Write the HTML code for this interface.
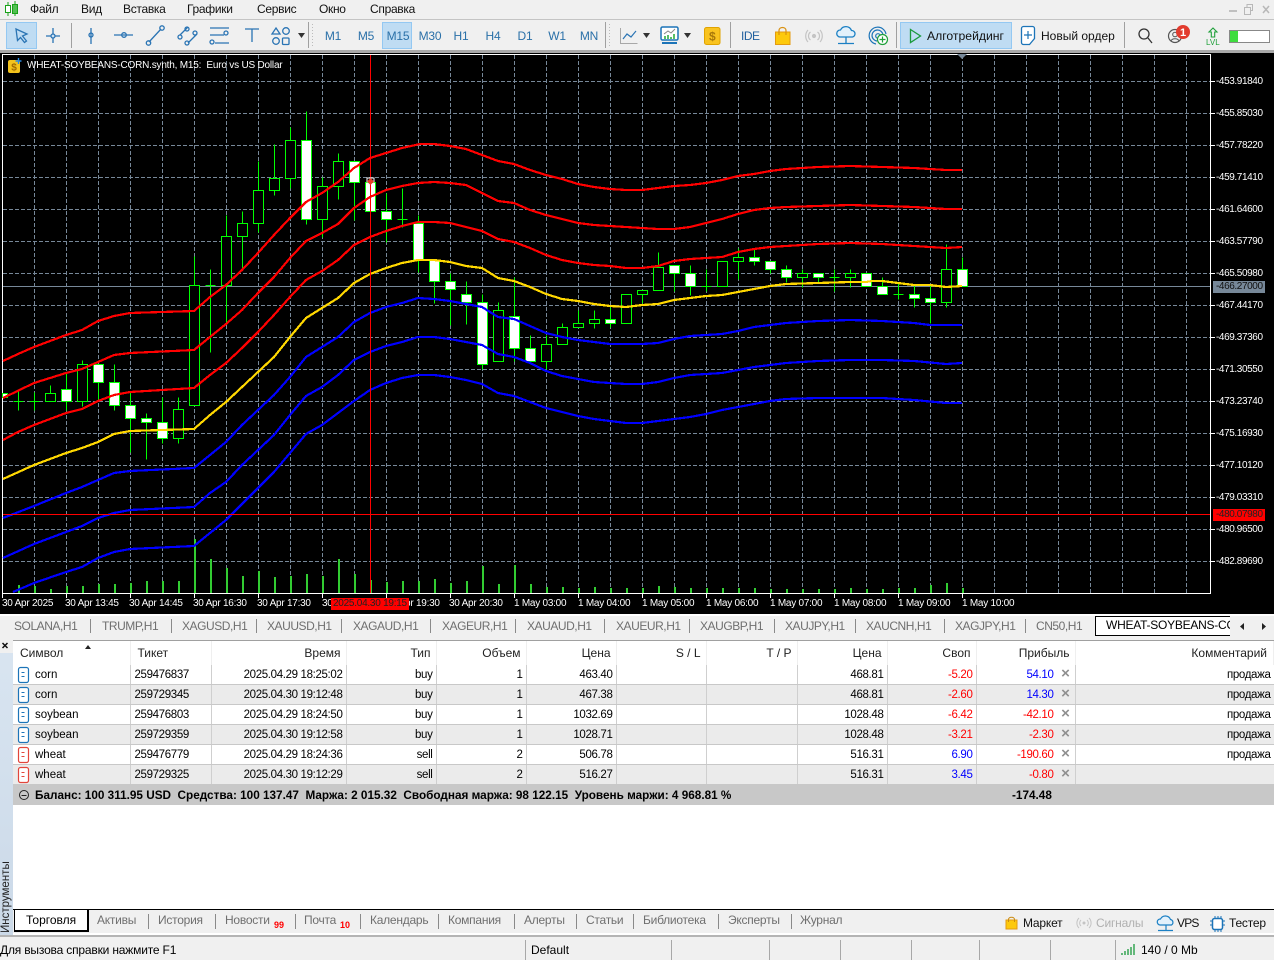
<!DOCTYPE html>
<html lang="ru"><head><meta charset="utf-8"><title>MetaTrader 5</title>
<style>
html,body{margin:0;padding:0;width:1274px;height:960px;overflow:hidden;background:#f0f0f0}
body{position:relative;font-family:"Liberation Sans",sans-serif;font-size:12px;color:#000}
.a{position:absolute;white-space:pre;line-height:16px}
svg{position:absolute;left:0;top:0;overflow:visible}
.m{top:1px;font-size:12px;color:#111;letter-spacing:-.3px}
.tf{top:28px;font-size:12px;color:#2a70a8;width:30px;text-align:center;letter-spacing:-.2px}
.tab{top:618px;font-size:12px;color:#6f6f6f;letter-spacing:-.45px}
.sp{position:absolute;width:1px;background:#8a8a8a}
.bt{top:912px;font-size:12px;color:#6f6f6f;letter-spacing:-.25px}
.br{top:915px;font-size:12px;color:#111;letter-spacing:-.2px}
#chart{position:absolute;left:0;top:53px;width:1274px;height:561px;background:#000}
.p{position:absolute;left:1216px;color:#fff;font-size:10px;line-height:12px;white-space:pre;letter-spacing:-.4px}
.tm{position:absolute;top:545px;color:#fff;font-size:10px;line-height:12px;white-space:pre;letter-spacing:-.25px}
table{position:absolute;left:13px;top:641px;width:1261px;border-collapse:collapse;table-layout:fixed;font-size:11.5px;background:#fff}
td,th{padding:2px 3px 0 0;text-align:right;font-weight:normal;overflow:hidden;white-space:nowrap;height:17px;line-height:17px;border-right:1px solid #cfcfcf;border-bottom:1px solid #c8c8c8;letter-spacing:-.35px}
td:last-child{border-right:0}
th{height:24px;line-height:24px;padding:0 5px 0 0;border-right:1px solid #efefef;border-bottom:0;color:#222;font-size:12px;letter-spacing:0}
tr.g td{background:#ebebeb}
td.l{text-align:left;padding-left:4px}td.n{text-align:left;padding-left:22px;letter-spacing:0}
.r{color:#f00}.b{color:#00f}
.x{display:inline-block;width:12px;margin-left:6px;text-align:center;color:#8f8f8f;font-weight:bold;font-size:15px;line-height:12px;letter-spacing:0}
#sum{position:absolute;left:13px;top:785px;width:1261px;height:20px;background:#c8c8c8;font-weight:bold;font-size:11.75px;line-height:20px}
</style></head><body>

<!-- menu -->
<svg width="30" height="20"><g stroke="#18a018" fill="none"><path d="M8 2v14M15 1v15"/><rect x="5.5" y="5.5" width="5" height="7" fill="#fff"/><rect x="12.5" y="4.5" width="5" height="9" fill="#4fc04f"/></g></svg>
<span class="a m" style="left:30px">Файл</span><span class="a m" style="left:81px">Вид</span><span class="a m" style="left:123px">Вставка</span><span class="a m" style="left:187px">Графики</span><span class="a m" style="left:257px">Сервис</span><span class="a m" style="left:319px">Окно</span><span class="a m" style="left:370px">Справка</span>
<svg width="1274" height="20"><path d="M1229 12h8v-2h-8z" fill="#c0c0c0"/><path d="M1244.500 7.500h6v7h-6zM1247 7V4.500h5.500v6H1251" fill="none" stroke="#b8b8b8"/><path d="M1263 6l6 7M1269 6l-6 7" stroke="#b8b8b8" stroke-width="1.500"/></svg>
<div style="position:absolute;left:0;top:19px;width:1274px;height:1px;background:#c4c4c4"></div>

<!-- toolbar selection -->
<div style="position:absolute;left:6px;top:22px;width:29px;height:25px;background:#bfdcf3;border:1px solid #94c8f2"></div>
<div style="position:absolute;left:382px;top:22px;width:28px;height:25px;background:#bfdcf3;border:1px solid #94c8f2"></div>
<div style="position:absolute;left:900px;top:22px;width:110px;height:25px;background:#bfdcf3;border:1px solid #94c8f2"></div>

<svg width="1274" height="53">
<g fill="none" stroke="#2a74b4" stroke-width="1.300">
<path d="M16 29l11 5-4.500 2 4 5-2 1.500-4-5-3 3z"/>
<path d="M46 36h14M53 28v15"/><circle cx="53" cy="36" r="2" fill="#cfe2f3"/>
<path d="M91 28v16"/><circle cx="91" cy="35" r="2"/>
<path d="M114 35h19"/><circle cx="124" cy="35" r="2.300"/>
<path d="M149 42l12-13"/><circle cx="148.500" cy="43" r="2.200"/><circle cx="162" cy="28" r="2.200"/>
<path d="M180 35l8-8M188 43l9-9"/><circle cx="180" cy="37" r="2"/><circle cx="187" cy="29" r="2"/><circle cx="187" cy="43" r="2"/><circle cx="195" cy="33" r="2"/>
<path d="M210 28h19M210 35h14M215 43h14"/><circle cx="226" cy="33" r="2"/><circle cx="212" cy="42" r="2"/>
<path d="M245 29h14M252 29v13"/>
<path d="M276 28l4 6h-8z"/><circle cx="286" cy="31" r="3.300"/><circle cx="276" cy="41" r="3.300"/><rect x="282.500" y="38" width="6.500" height="6.500" rx="1"/>
</g>
<path d="M298 33h7l-3.500 5z" fill="#333"/>
<path d="M71.500 23v25M308.500 22v26M605.500 22v26M730.500 22v26M896.500 22v26M1124.500 22v26" stroke="#a0a0a0"/>
<path d="M312.500 24v24M609.500 24v24" stroke="#bbb" stroke-dasharray="1 2"/>
<!-- chart type -->
<path d="M620.500 28v15.500h17" fill="none" stroke="#a8a8a8"/><path d="M623 39l4-5 4 3 5-6" fill="none" stroke="#2a74b4" stroke-width="1.200"/>
<path d="M643 33h7l-3.500 5zM684 33h7l-3.500 5z" fill="#333"/>
<!-- monitor -->
<rect x="661" y="27" width="17" height="13" rx="1.500" fill="#fff" stroke="#1c74b8" stroke-width="1.500"/><path d="M662 43h15" stroke="#1c74b8" stroke-width="2"/><path d="M664 34l4-3 3 2 4-4" fill="none" stroke="#888"/><path d="M665 39v-3M668 39v-4M671 39v-2M674 39v-5" stroke="#22aa33" stroke-width="1.500"/>
<!-- gold -->
<rect x="704.500" y="27.500" width="15.500" height="17" rx="2" fill="#f9c31f" stroke="#e0a300"/>
<text x="712.300" y="40.500" font-size="12" font-weight="bold" text-anchor="middle" fill="#a8780a" font-family="Liberation Sans">$</text>
<text x="741" y="40" font-size="12" fill="#1f5f9e" font-family="Liberation Sans" letter-spacing="-.5">IDE</text>
<!-- bag -->
<path d="M775.500 32h14.500v12.500h-14.500z" fill="#fdc90c" stroke="#e39a10"/><path d="M779 35v-4.500c0-4 7-4 7 0V35" fill="none" stroke="#d99010" stroke-width="1.200"/>
<!-- signal -->
<g fill="none" stroke="#c4c4c4" stroke-width="1.200"><circle cx="814" cy="36" r="1.500" fill="#c4c4c4"/><path d="M810.500 32a5 5 0 0 0 0 8M817.500 32a5 5 0 0 1 0 8M808 30a9 9 0 0 0 0 12M820 30a9 9 0 0 1 0 12"/></g>
<!-- cloud -->
<path d="M840 37a3.500 3.500 0 0 1 .5-7 6 6 0 0 1 11 .5 3.300 3.300 0 0 1 1 6.500z" fill="#e3f1fb" stroke="#1c80c4" stroke-width="1.300"/><path d="M846 37v6M838 43.500h16" stroke="#1c80c4" stroke-width="1.300"/>
<!-- vps -->
<g fill="none" stroke="#1c74b8" stroke-width="1.200"><path d="M876 44a8.500 8.500 0 1 1 10-10"/><path d="M877 41a5.500 5.500 0 1 1 6-6"/><circle cx="878" cy="36" r="2.300"/></g><circle cx="882.500" cy="39.500" r="5" fill="#fff" stroke="#1fa03a" stroke-width="1.200"/><path d="M882.500 36.500v6M879.500 39.500h6" stroke="#1fa03a" stroke-width="1.200"/>
<!-- play -->
<path d="M910.500 29.500l10 6.500-10 6.500z" fill="none" stroke="#1a9a3c" stroke-width="1.300"/>
<!-- new order -->
<path d="M1021.500 28.500a2 2 0 0 1 2-2h9a2 2 0 0 1 2 2v10l-5 6h-6a2 2 0 0 1-2-2z" fill="#fff" stroke="#1c74b8" stroke-width="1.300"/><path d="M1028 31v8M1024 35h8" stroke="#1c74b8" stroke-width="1.200"/>
<!-- search -->
<circle cx="1144" cy="34" r="5" fill="none" stroke="#333" stroke-width="1.300"/><path d="M1148 38l4 5" stroke="#333" stroke-width="1.300"/>
<!-- user -->
<circle cx="1175" cy="36" r="6.500" fill="none" stroke="#555" stroke-width="1.200"/><circle cx="1175" cy="34.500" r="2.300" fill="none" stroke="#555"/><path d="M1171 41c1-3 7-3 8 0" fill="none" stroke="#555"/>
<circle cx="1183" cy="32" r="7" fill="#e23b2e"/><text x="1183" y="36" font-size="11" font-weight="bold" fill="#fff" text-anchor="middle" font-family="Liberation Sans">1</text>
<!-- lvl -->
<path d="M1213 28l4 4h-2.300v5h-3.400v-5H1209z" fill="none" stroke="#1fa03a" stroke-width="1.100"/>
<text x="1206" y="45" font-size="8" fill="#1fa03a" font-family="Liberation Sans">LVL</text>
<rect x="1229.500" y="30.500" width="40" height="12" fill="#fff" stroke="#888"/><rect x="1230" y="31" width="8" height="11" fill="#3fdc3f"/>
</svg>
<span class="a tf" style="left:318px">M1</span><span class="a tf" style="left:351px">M5</span><span class="a tf" style="left:383px">M15</span><span class="a tf" style="left:415px">M30</span><span class="a tf" style="left:446px">H1</span><span class="a tf" style="left:478px">H4</span><span class="a tf" style="left:510px">D1</span><span class="a tf" style="left:542px">W1</span><span class="a tf" style="left:574px">MN</span>
<span class="a" style="left:927px;top:28px;font-size:12.2px;color:#111">Алготрейдинг</span>
<span class="a" style="left:1041px;top:28px;font-size:12px;color:#111">Новый ордер</span>
<div style="position:absolute;left:0;top:50px;width:1274px;height:3px;background:#a8a8a8"></div>

<!-- chart -->
<div id="chart"></div>
<svg width="1274" height="614" style="top:0">
<rect x="2.500" y="54.500" width="1208" height="539" fill="none" stroke="#fff"/>
<path fill="none" stroke="#778899" stroke-dasharray="4 2" d="M34.500 55V593M66.500 55V593M98.500 55V593M130.500 55V593M162.500 55V593M194.500 55V593M226.500 55V593M258.500 55V593M290.500 55V593M322.500 55V593M354.500 55V593M386.500 55V593M418.500 55V593M450.500 55V593M482.500 55V593M514.500 55V593M546.500 55V593M578.500 55V593M610.500 55V593M642.500 55V593M674.500 55V593M706.500 55V593M738.500 55V593M770.500 55V593M802.500 55V593M834.500 55V593M866.500 55V593M898.500 55V593M930.500 55V593M962.500 55V593M994.500 55V593M1026.500 55V593M1058.500 55V593M1090.500 55V593M1122.500 55V593M1154.500 55V593M1186.500 55V593M3 81.500H1210M3 113.500H1210M3 145.500H1210M3 177.500H1210M3 209.500H1210M3 241.500H1210M3 273.500H1210M3 305.500H1210M3 337.500H1210M3 369.500H1210M3 401.500H1210M3 433.500H1210M3 465.500H1210M3 497.500H1210M3 529.500H1210M3 561.500H1210"/>
<path d="M3 286.500H1210" stroke="#778899"/>
<path d="M957 54h10l-5 5z" fill="#778899"/>
<!-- ticks -->
<path stroke="#fff" d="M1211 81.500h4M1211 113.500h4M1211 145.500h4M1211 177.500h4M1211 209.500h4M1211 241.500h4M1211 273.500h4M1211 305.500h4M1211 337.500h4M1211 369.500h4M1211 401.500h4M1211 433.500h4M1211 465.500h4M1211 497.500h4M1211 529.500h4M1211 561.500h4M2.500 594v4M66.500 594v4M130.500 594v4M194.500 594v4M258.500 594v4M322.500 594v4M386.500 594v4M450.500 594v4M514.500 594v4M578.500 594v4M642.500 594v4M706.500 594v4M770.500 594v4M834.500 594v4M898.500 594v4M962.500 594v4"/>
<!-- volumes -->
<path stroke="#32cd32" stroke-width="2" shape-rendering="crispEdges" d="M19 585V593M35 586V593M51 589V593M67 586V593M83 586V593M99 584V593M115 584V593M131 583V593M147 581V593M163 581V593M179 581V593M195 539V593M211 559V593M227 568V593M243 576V593M259 571V593M275 577V593M291 576V593M307 574V593M323 576V593M339 559V593M355 574V593M371 580V593M387 582V593M403 581V593M419 581V593M435 579V593M451 583V593M467 581V593M483 566V593M499 584V593M515 565V593M531 584V593M547 587V593M563 587V593M579 588V593M595 587V593M611 588V593M627 588V593M643 588V593M659 586V593M675 587V593M691 588V593M707 588V593M723 588V593M739 588V593M755 588V593M771 589V593M787 589V593M803 589V593M819 589V593M835 589V593M851 588V593M867 589V593M883 589V593M899 588V593M915 588V593M931 585V593M947 583V593M963 588V593"/>
<!-- candles -->
<g stroke="#00ff00" shape-rendering="crispEdges" transform="translate(0,.5)">
<path fill="none" d="M18.500 389V410M34.500 392V410M50.500 385V401M66.500 373V410M82.500 360V406M98.500 364V400M114.500 364V410M130.500 392V452M146.500 413V459M162.500 397V443M178.500 397V443M194.500 256V405M210.500 269V352M226.500 215V322M242.500 211V268M258.500 161V232M274.500 144V195M290.500 127V188M306.500 111V224M322.500 177V237M338.500 153V199M354.500 161V220M370.500 179V211M386.500 193V242M402.500 188V227M418.500 215V272M434.500 260V303M450.500 273V325M466.500 281V324M482.500 294V369M498.500 302V361M514.500 277V361M530.500 335V363M546.500 335V369M562.500 323V344M578.500 310V327M594.500 310V328M610.500 307V327M626.500 294V323M642.500 290V303M658.500 252V290M674.500 265V291M690.500 265V295M706.500 269V291M722.500 261V286M738.500 248V279M754.500 248V265M770.500 261V273M786.500 265V282M802.500 269V287M818.500 273V282M834.500 269V291M850.500 269V287M866.500 273V286M882.500 277V294M898.500 282V299M914.500 285V307M930.500 285V323M946.500 244V307M962.500 257V286M13.500 401h10M29.500 401h10M205.500 285h10M397.500 219h10M701.500 286h10M829.500 277h10M893.500 294h10"/>
<path fill="#000" d="M45.500 393h10v8h-10zM77.500 364h10v37h-10zM173.500 409h10v29h-10zM189.500 285h10v120h-10zM221.500 236h10v49h-10zM237.500 223h10v13h-10zM253.500 190h10v33h-10zM269.500 178h10v12h-10zM285.500 140h10v38h-10zM317.500 186h10v33h-10zM333.500 161h10v25h-10zM493.500 310h10v51h-10zM541.500 344h10v17h-10zM557.500 327h10v17h-10zM573.500 323h10v4h-10zM589.500 319h10v4h-10zM621.500 294h10v29h-10zM637.500 290h10v4h-10zM653.500 267h10v23h-10zM717.500 261h10v25h-10zM733.500 257h10v4h-10zM797.500 273h10v4h-10zM845.500 273h10v4h-10zM941.500 269h10v33h-10z"/>
<path fill="#fff" d="M2.500 393h5v4h-5zM61.500 389h10v12h-10zM93.500 364h10v18h-10zM109.500 382h10v23h-10zM125.500 405h10v13h-10zM141.500 418h10v4h-10zM157.500 422h10v16h-10zM301.500 140h10v79h-10zM349.500 161h10v21h-10zM365.500 182h10v29h-10zM381.500 211h10v8h-10zM413.500 223h10v37h-10zM429.500 260h10v21h-10zM445.500 281h10v8h-10zM461.500 294h10v8h-10zM477.500 302h10v62h-10zM509.500 316h10v32h-10zM525.500 348h10v13h-10zM605.500 319h10v4h-10zM669.500 265h10v8h-10zM685.500 273h10v13h-10zM749.500 257h10v4h-10zM765.500 261h10v8h-10zM781.500 269h10v8h-10zM813.500 273h10v4h-10zM861.500 273h10v13h-10zM877.500 286h10v8h-10zM909.500 294h10v4h-10zM925.500 298h10v4h-10zM957.500 269h10v17h-10z"/>
</g>
<!-- bands -->
<g fill="none" stroke-width="2.200" stroke-linejoin="round" shape-rendering="crispEdges">
<polyline stroke="#f00" points="3,361 18,354 34,347 66,335 82,330 98,321 114,316 130,313 194,311 210,297 226,285 242,270 258,253 274,235 290,218 306,202 322,193 338,182 354,168 370,158 386,153 402,148 420,144 434,144 450,146 466,149 482,155 498,161 514,164 530,170 546,175 562,179 578,184 594,187 610,189 626,190 642,190 658,188 674,186 690,185 706,183 722,180 738,176 754,174 770,171 786,169 802,168 818,167 850,166 882,167 914,168 946,170 962,170"/>
<polyline stroke="#f00" points="3,398 34,383 66,373 82,369 98,362 114,355 130,353 194,350 210,337 226,324 242,310 258,293 274,277 290,258 306,241 322,233 338,224 354,208 370,197 386,190 402,186 418,183 434,182 450,183 466,185 482,193 498,201 514,203 530,210 546,215 562,219 578,223 594,225 610,226 626,227 642,228 658,229 674,229 690,227 706,223 722,219 738,214 754,210 770,208 786,207 818,206 850,205 882,206 914,207 946,209 962,209"/>
<polyline stroke="#f00" points="3,440 18,432 34,425 66,413 82,409 98,401 114,395 130,392 194,388 210,375 226,363 242,348 258,332 274,315 290,297 306,280 322,271 338,260 354,245 370,237 386,231 402,226 418,222 434,222 450,223 466,227 482,231 498,239 514,242 530,248 546,255 562,260 578,263 594,265 610,266 626,268 642,268 658,266 674,261 690,259 706,258 722,257 738,252 754,249 770,247 786,246 802,245 818,244 850,243 882,244 898,245 914,246 930,247 946,248 962,247"/>
<polyline stroke="#ffd700" points="3,479 34,465 66,453 82,448 98,442 114,434 130,431 194,429 210,415 226,402 242,387 258,372 274,357 290,337 306,318 322,308 338,298 354,283 370,274 386,268 402,263 418,260 434,260 450,262 466,266 482,268 498,278 514,281 530,287 546,294 562,299 578,301 594,304 610,306 626,307 642,305 658,304 674,300 690,298 706,296 722,295 738,292 754,289 770,286 786,284 818,283 850,282 866,282 872,281 882,281 898,283 914,285 930,285 946,287 962,286"/>
<polyline stroke="#00f" points="3,518 34,506 66,493 82,487 98,480 114,473 130,471 194,468 210,455 226,442 242,425 258,410 274,395 290,377 306,357 322,347 338,337 354,322 370,313 386,307 402,303 418,298 434,299 450,301 466,304 482,307 498,317 514,319 530,326 546,333 562,337 578,340 594,342 610,344 642,344 658,343 674,339 690,336 706,335 722,334 738,331 754,327 770,325 786,323 818,321 850,320 882,321 898,322 914,323 930,325 962,325"/>
<polyline stroke="#00f" points="3,558 34,544 66,532 82,526 98,518 114,513 130,510 194,507 210,493 226,482 242,465 258,450 274,435 290,415 306,396 322,387 338,375 354,360 370,352 386,346 402,342 418,337 434,337 450,339 466,342 482,345 498,354 514,357 530,363 546,371 562,376 578,379 594,382 626,384 642,384 658,382 674,378 690,375 706,374 722,373 738,370 754,367 770,365 786,363 818,361 850,360 882,360 914,361 946,364 962,363"/>
<polyline stroke="#00f" points="13,592 34,583 66,572 82,567 98,558 114,552 130,549 194,546 210,533 226,520 242,504 258,488 274,472 290,453 306,434 322,425 338,413 354,401 370,390 386,383 402,378 418,375 434,375 450,377 466,380 482,384 498,393 514,396 530,402 546,408 562,412 578,416 594,419 610,421 626,423 642,423 658,421 674,419 690,417 706,414 722,410 738,407 754,404 770,401 786,399 818,398 850,398 882,398 914,400 946,403 962,403"/>
</g>
<path d="M370.500 55V593M3 514.500H1210" stroke="#f00"/>
<path d="M367 178h7v4h-7z" fill="none" stroke="#fff"/><path d="M370.500 178l3.500 3.500-3.500 3.500-3.500-3.500z" fill="#e8402a"/>
<!-- chart file icon -->
<rect x="8" y="60" width="12" height="13" rx="2" fill="#f3c31c"/><text x="14" y="70.500" font-size="10" font-weight="bold" text-anchor="middle" fill="#a06a00" font-family="Liberation Sans">$</text><path d="M18.500 58v6M15.500 61h6" stroke="#2a8ae0" stroke-width="1.400"/>
</svg>
<span class="a" style="left:27px;top:58px;font-size:10px;color:#fff;letter-spacing:-.2px">WHEAT-SOYBEANS-CORN.synth, M15:  Euro vs US Dollar</span>
<div style="position:absolute;left:0;top:53px;width:1274px;height:561px">
<span class="p" style="top:23px">-453.91840</span><span class="p" style="top:55px">-455.85030</span><span class="p" style="top:87px">-457.78220</span><span class="p" style="top:119px">-459.71410</span><span class="p" style="top:151px">-461.64600</span><span class="p" style="top:183px">-463.57790</span><span class="p" style="top:215px">-465.50980</span><span class="p" style="top:247px">-467.44170</span><span class="p" style="top:279px">-469.37360</span><span class="p" style="top:311px">-471.30550</span><span class="p" style="top:343px">-473.23740</span><span class="p" style="top:375px">-475.16930</span><span class="p" style="top:407px">-477.10120</span><span class="p" style="top:439px">-479.03310</span><span class="p" style="top:471px">-480.96500</span><span class="p" style="top:503px">-482.89690</span>
<span class="p" style="left:1213px;top:228px;width:49px;padding-left:3px;background:#778899;color:#111">-466.27000</span>
<span class="p" style="left:1213px;top:456px;width:49px;padding-left:3px;background:#f00;color:#222">-480.07980</span>
<span class="tm" style="left:2px">30 Apr 2025</span><span class="tm" style="left:65px">30 Apr 13:45</span><span class="tm" style="left:129px">30 Apr 14:45</span><span class="tm" style="left:193px">30 Apr 16:30</span><span class="tm" style="left:257px">30 Apr 17:30</span><span class="tm" style="left:322px">30 Apr 18:30</span><span class="tm" style="left:386px">30 Apr 19:30</span><span class="tm" style="left:449px">30 Apr 20:30</span><span class="tm" style="left:514px">1 May 03:00</span><span class="tm" style="left:578px">1 May 04:00</span><span class="tm" style="left:642px">1 May 05:00</span><span class="tm" style="left:706px">1 May 06:00</span><span class="tm" style="left:770px">1 May 07:00</span><span class="tm" style="left:834px">1 May 08:00</span><span class="tm" style="left:898px">1 May 09:00</span><span class="tm" style="left:962px">1 May 10:00</span>
<span class="tm" style="left:331px;width:76px;padding-left:2px;background:#f00;color:#222">2025.04.30 19:15</span>
</div>

<!-- chart tabs -->
<div style="position:absolute;left:0;top:614px;width:1274px;height:2px;background:#fff"></div>
<span class="a tab" style="left:14px">SOLANA,H1</span><i class="sp" style="left:90px;top:619px;height:14px"></i><span class="a tab" style="left:102px">TRUMP,H1</span><i class="sp" style="left:171px;top:619px;height:14px"></i><span class="a tab" style="left:182px">XAGUSD,H1</span><i class="sp" style="left:256px;top:619px;height:14px"></i><span class="a tab" style="left:267px">XAUUSD,H1</span><i class="sp" style="left:341px;top:619px;height:14px"></i><span class="a tab" style="left:353px">XAGAUD,H1</span><i class="sp" style="left:430px;top:619px;height:14px"></i><span class="a tab" style="left:442px">XAGEUR,H1</span><i class="sp" style="left:515px;top:619px;height:14px"></i><span class="a tab" style="left:527px">XAUAUD,H1</span><i class="sp" style="left:604px;top:619px;height:14px"></i><span class="a tab" style="left:616px">XAUEUR,H1</span><i class="sp" style="left:689px;top:619px;height:14px"></i><span class="a tab" style="left:700px">XAUGBP,H1</span><i class="sp" style="left:774px;top:619px;height:14px"></i><span class="a tab" style="left:785px">XAUJPY,H1</span><i class="sp" style="left:855px;top:619px;height:14px"></i><span class="a tab" style="left:866px">XAUCNH,H1</span><i class="sp" style="left:944px;top:619px;height:14px"></i><span class="a tab" style="left:955px">XAGJPY,H1</span><i class="sp" style="left:1025px;top:619px;height:14px"></i><span class="a tab" style="left:1036px">CN50,H1</span>
<div style="position:absolute;left:1095px;top:616px;width:134px;height:18px;background:#fff;border-top:1px solid #000;border-left:1px solid #000;border-bottom:1px solid #000;overflow:hidden"><span class="a" style="left:10px;top:0;font-size:12px;letter-spacing:-.25px">WHEAT-SOYBEANS-CORN.synth,M15</span></div>
<svg width="1274" height="640"><path d="M1244 623l-4 3.500 4 3.500zM1262 623l4 3.500-4 3.500z" fill="#222"/></svg>
<div style="position:absolute;left:0;top:636px;width:1274px;height:4px;background:#f0f0f0"></div>

<!-- terminal -->
<div style="position:absolute;left:0;top:640px;width:13px;height:295px;background:linear-gradient(#d9e5f1,#cbd9e8)"></div>
<div style="position:absolute;left:0;top:640px;width:13px;height:13px;background:#f0f0f0"></div>
<svg width="14" height="652"><path d="M2.500 643l5 5M7.500 643l-5 5" stroke="#111" stroke-width="1.500"/></svg>
<div style="position:absolute;left:13px;top:640px;width:1261px;height:270px;background:#fff;border-top:1px solid #a0a0a0;box-sizing:border-box"></div>
<table>
<colgroup><col style="width:117px"><col style="width:81px"><col style="width:135px"><col style="width:90px"><col style="width:90px"><col style="width:90px"><col style="width:90px"><col style="width:91px"><col style="width:90px"><col style="width:89px"><col style="width:99px"><col></colgroup>
<tr><th style="text-align:left;padding-left:7px">Символ</th><th style="text-align:left;padding-left:7px">Тикет</th><th>Время</th><th>Тип</th><th>Объем</th><th>Цена</th><th>S / L</th><th>T / P</th><th>Цена</th><th>Своп</th><th>Прибыль</th><th style="padding-right:6px">Комментарий</th></tr>
<tr><td class="n">corn</td><td class="l">259476837</td><td>2025.04.29 18:25:02</td><td>buy</td><td>1</td><td>463.40</td><td></td><td></td><td>468.81</td><td class="r">-5.20</td><td class="b">54.10<span class="x">×</span></td><td>продажа</td></tr>
<tr class="g"><td class="n">corn</td><td class="l">259729345</td><td>2025.04.30 19:12:48</td><td>buy</td><td>1</td><td>467.38</td><td></td><td></td><td>468.81</td><td class="r">-2.60</td><td class="b">14.30<span class="x">×</span></td><td>продажа</td></tr>
<tr><td class="n">soybean</td><td class="l">259476803</td><td>2025.04.29 18:24:50</td><td>buy</td><td>1</td><td>1032.69</td><td></td><td></td><td>1028.48</td><td class="r">-6.42</td><td class="r">-42.10<span class="x">×</span></td><td>продажа</td></tr>
<tr class="g"><td class="n">soybean</td><td class="l">259729359</td><td>2025.04.30 19:12:58</td><td>buy</td><td>1</td><td>1028.71</td><td></td><td></td><td>1028.48</td><td class="r">-3.21</td><td class="r">-2.30<span class="x">×</span></td><td>продажа</td></tr>
<tr><td class="n">wheat</td><td class="l">259476779</td><td>2025.04.29 18:24:36</td><td>sell</td><td>2</td><td>506.78</td><td></td><td></td><td>516.31</td><td class="b">6.90</td><td class="r">-190.60<span class="x">×</span></td><td>продажа</td></tr>
<tr class="g"><td class="n">wheat</td><td class="l">259729325</td><td>2025.04.30 19:12:29</td><td>sell</td><td>2</td><td>516.27</td><td></td><td></td><td>516.31</td><td class="b">3.45</td><td class="r">-0.80<span class="x">×</span></td><td></td></tr>
</table>
<div id="sum"><span class="a" style="left:22px;top:3px;font-weight:bold">Баланс: 100 311.95 USD  Средства: 100 137.47  Маржа: 2 015.32  Свободная маржа: 98 122.15  Уровень маржи: 4 968.81 %</span><span class="a" style="left:999px;top:3px;font-weight:bold">-174.48</span></div>
<svg width="300" height="810">
<path d="M85 649h6l-3-4z" fill="#222"/>
<g fill="#fff" stroke="#1c74b8" stroke-width="1.200"><rect x="18.500" y="667.500" width="10" height="15" rx="2"/><rect x="18.500" y="687.500" width="10" height="15" rx="2"/><rect x="18.500" y="707.500" width="10" height="15" rx="2"/><rect x="18.500" y="727.500" width="10" height="15" rx="2"/></g>
<g fill="#fff" stroke="#e2453a" stroke-width="1.200"><rect x="18.500" y="747.500" width="10" height="15" rx="2"/><rect x="18.500" y="767.500" width="10" height="15" rx="2"/></g>
<path stroke="#1c74b8" d="M21.500 672.500h3M21.500 676.500h3M21.500 692.500h3M21.500 696.500h3M21.500 712.500h3M21.500 716.500h3M21.500 732.500h3M21.500 736.500h3"/>
<path stroke="#e2453a" d="M21.500 752.500h3M21.500 756.500h3M21.500 772.500h3M21.500 776.500h3"/>
<circle cx="24" cy="795" r="4.500" fill="none" stroke="#222"/><path d="M21.500 795.500h5" stroke="#222"/>
</svg>

<!-- bottom tabs -->
<div style="position:absolute;left:13px;top:909px;width:1261px;height:1px;background:#000"></div>
<div style="position:absolute;left:13px;top:910px;width:1261px;height:23px;background:#f0f0f0"></div>
<div style="position:absolute;left:14px;top:909px;width:72px;height:20px;background:#fff;border:1px solid #000;border-top:1px solid #000;border-bottom:2px solid #000;border-right:2px solid #000;box-sizing:content-box"></div>
<span class="a" style="left:26px;top:912px;font-size:12px">Торговля</span>
<span class="a bt" style="left:97px">Активы</span><i class="sp" style="left:148px;top:914px;height:15px"></i><span class="a bt" style="left:158px">История</span><i class="sp" style="left:215px;top:914px;height:15px"></i><span class="a bt" style="left:225px">Новости</span><span class="a" style="left:274px;top:917px;font-size:9px;font-weight:bold;color:#f00">99</span><i class="sp" style="left:295px;top:914px;height:15px"></i><span class="a bt" style="left:304px">Почта</span><span class="a" style="left:340px;top:917px;font-size:9px;font-weight:bold;color:#f00">10</span><i class="sp" style="left:360px;top:914px;height:15px"></i><span class="a bt" style="left:370px">Календарь</span><i class="sp" style="left:438px;top:914px;height:15px"></i><span class="a bt" style="left:448px">Компания</span><i class="sp" style="left:514px;top:914px;height:15px"></i><span class="a bt" style="left:524px">Алерты</span><i class="sp" style="left:576px;top:914px;height:15px"></i><span class="a bt" style="left:586px">Статьи</span><i class="sp" style="left:633px;top:914px;height:15px"></i><span class="a bt" style="left:643px">Библиотека</span><i class="sp" style="left:718px;top:914px;height:15px"></i><span class="a bt" style="left:728px">Эксперты</span><i class="sp" style="left:791px;top:914px;height:15px"></i><span class="a bt" style="left:800px">Журнал</span>
<span class="a br" style="left:1023px">Маркет</span><span class="a br" style="left:1096px;color:#b0b0b0">Сигналы</span><span class="a br" style="left:1177px;letter-spacing:-.8px">VPS</span><span class="a br" style="left:1229px">Тестер</span>
<svg width="1274" height="960">
<path d="M1006 920h11v9h-11z" fill="#fdc90c" stroke="#e39a10"/><path d="M1008.500 922v-2.500c0-3 6-3 6 0V922" fill="none" stroke="#c98a10"/>
<g fill="none" stroke="#c4c4c4"><circle cx="1084" cy="923" r="1" fill="#c4c4c4"/><path d="M1081 920a4 4 0 0 0 0 6M1087 920a4 4 0 0 1 0 6M1079 918a7 7 0 0 0 0 10M1089 918a7 7 0 0 1 0 10"/></g>
<path d="M1160 925a3 3 0 0 1 .5-6 5.500 5.500 0 0 1 10 .5 3 3 0 0 1 1 5.500z" fill="#e3f1fb" stroke="#1c80c4" stroke-width="1.200"/><path d="M1166 925v5M1158 930.500h15" stroke="#1c80c4" stroke-width="1.200"/>
<rect x="1212.500" y="918.500" width="10" height="11" rx="2" fill="#fff" stroke="#1c74b8" stroke-width="1.500"/><path d="M1215 916v2M1218 916v2M1221 916v2M1215 930v2M1218 930v2M1221 930v2M1210 921h2M1210 925h2M1223 921h2M1223 925h2" stroke="#1c74b8"/>
<path stroke="#1a9a3c" stroke-width="1.300" d="M1122 955v-2M1125 955v-4M1128 955v-6M1131 955v-8M1134 955v-11"/>
</svg>
<div style="position:absolute;left:13px;top:933px;width:1261px;height:2px;background:#fff"></div>
<div style="position:absolute;left:0;top:935px;width:1274px;height:2px;background:#b4b4b4"></div>
<span class="a" style="left:6px;top:933px;font-size:11.5px;color:#222;transform-origin:0 0;transform:translate(-8px,0) rotate(-90deg)">Инструменты</span>

<!-- status -->
<span class="a" style="left:0;top:942px;font-size:12px;letter-spacing:-.18px">Для вызова справки нажмите F1</span>
<span class="a" style="left:531px;top:942px;font-size:12px">Default</span>
<span class="a" style="left:1141px;top:942px;font-size:12px">140 / 0 Mb</span>
<i class="sp" style="left:525px;top:940px;height:20px;background:#a8a8a8"></i><i class="sp" style="left:671px;top:940px;height:20px;background:#a8a8a8"></i><i class="sp" style="left:769px;top:940px;height:20px;background:#a8a8a8"></i><i class="sp" style="left:840px;top:940px;height:20px;background:#a8a8a8"></i><i class="sp" style="left:911px;top:940px;height:20px;background:#a8a8a8"></i><i class="sp" style="left:979px;top:940px;height:20px;background:#a8a8a8"></i><i class="sp" style="left:1050px;top:940px;height:20px;background:#a8a8a8"></i><i class="sp" style="left:1115px;top:940px;height:20px;background:#a8a8a8"></i>
</body></html>
